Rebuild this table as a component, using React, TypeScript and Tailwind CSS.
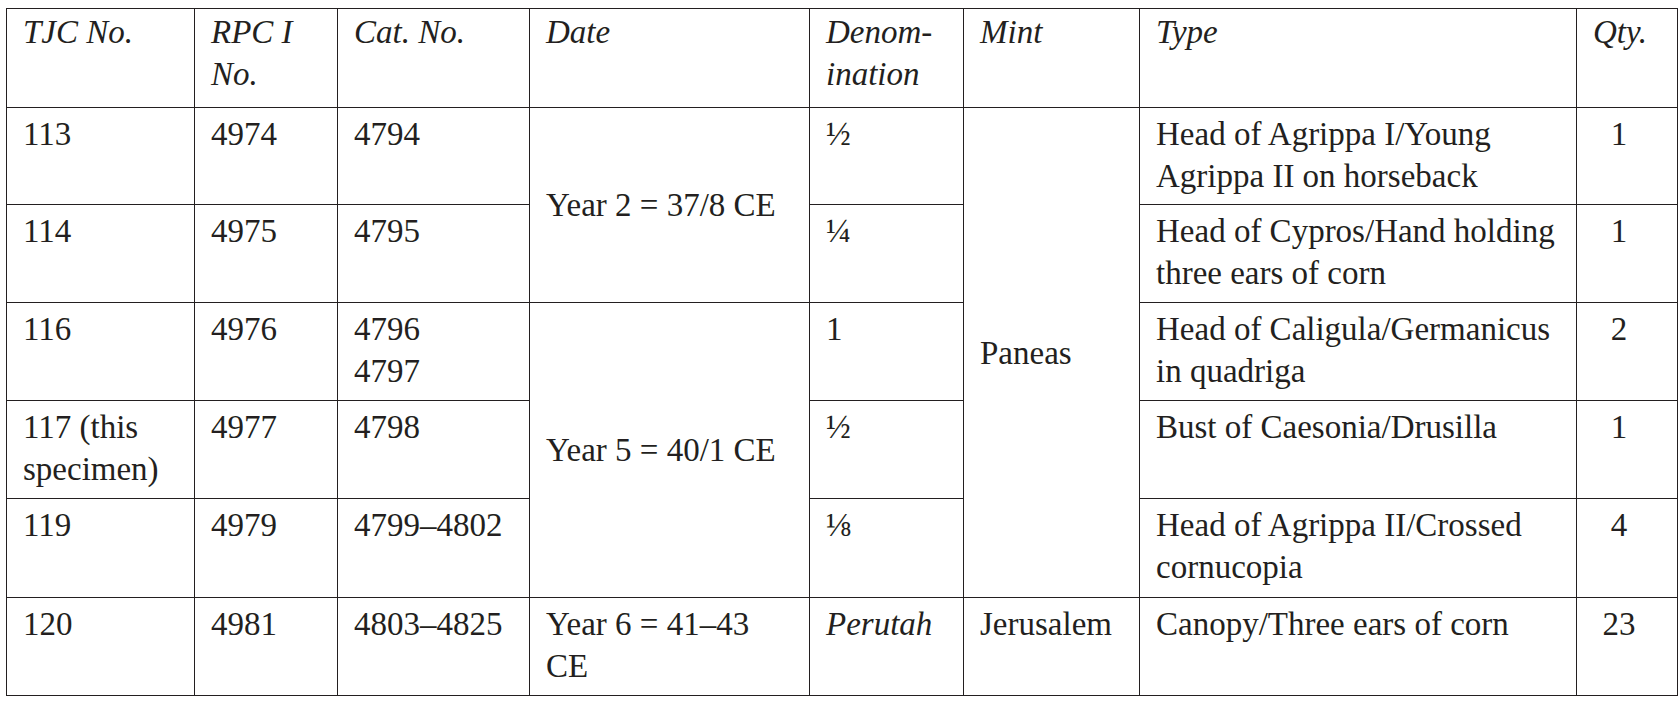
import React from 'react';

// coin register, rows in print order; merged Date / Mint cells use rowSpan
const HEADERS = ['TJC No.', 'RPC I\nNo.', 'Cat. No.', 'Date', 'Denom-\nination', 'Mint', 'Type', 'Qty.'];
const WIDTHS = ['w-[188px]', 'w-[143px]', 'w-[192px]', 'w-[280px]', 'w-[154px]', 'w-[176px]', 'w-[437px]', 'w-[101px]'];

const head = 'border border-[#231f20] px-4 pt-[2px] align-top text-left font-normal italic';
const cell = 'border border-[#231f20] px-4 pt-[5px] align-top';
const merged = 'border border-[#231f20] px-4 align-middle';
const qty = 'border border-[#231f20] pl-4 pr-8 pt-[5px] align-top text-center';

function Lines({ text }: { text: string }) {
  return (
    <>
      {text.split('\n').map((t, i) => (
        <div key={i} className="whitespace-nowrap">{t}</div>
      ))}
    </>
  );
}

export default function App() {
  return (
    <div
      className="bg-white min-h-screen pl-[6px] pt-[8px] text-[#231f20] text-[33px] leading-[42px]"
      style={{ fontFamily: '"Liberation Serif", "Times New Roman", serif' }}
    >
      <table className="table-fixed border-collapse w-[1671px]">
        <colgroup>
          {WIDTHS.map((w, i) => (
            <col key={i} className={w} />
          ))}
        </colgroup>
        <thead>
          <tr className="h-[99px]">
            {HEADERS.map((h, i) => (
              <th key={i} className={head}>
                <Lines text={h} />
              </th>
            ))}
          </tr>
        </thead>
        <tbody>
          <tr className="h-[97px]">
            <td className={cell}>113</td>
            <td className={cell}>4974</td>
            <td className={cell}>4794</td>
            <td className={merged} rowSpan={2}>Year 2 = 37/8 CE</td>
            <td className={cell}>½</td>
            <td className={merged} rowSpan={5}>Paneas</td>
            <td className={cell}><Lines text={'Head of Agrippa I/Young\nAgrippa II on horseback'} /></td>
            <td className={qty}>1</td>
          </tr>
          <tr className="h-[98px]">
            <td className={cell}>114</td>
            <td className={cell}>4975</td>
            <td className={cell}>4795</td>
            <td className={cell}>¼</td>
            <td className={cell}><Lines text={'Head of Cypros/Hand holding\nthree ears of corn'} /></td>
            <td className={qty}>1</td>
          </tr>
          <tr className="h-[98px]">
            <td className={cell}>116</td>
            <td className={cell}>4976</td>
            <td className={cell}><Lines text={'4796\n4797'} /></td>
            <td className={merged} rowSpan={3}>Year 5 = 40/1 CE</td>
            <td className={cell}>1</td>
            <td className={cell}><Lines text={'Head of Caligula/Germanicus\nin quadriga'} /></td>
            <td className={qty}>2</td>
          </tr>
          <tr className="h-[98px]">
            <td className={cell}><Lines text={'117 (this\nspecimen)'} /></td>
            <td className={cell}>4977</td>
            <td className={cell}>4798</td>
            <td className={cell}>½</td>
            <td className={cell}>Bust of Caesonia/Drusilla</td>
            <td className={qty}>1</td>
          </tr>
          <tr className="h-[99px]">
            <td className={cell}>119</td>
            <td className={cell}>4979</td>
            <td className={cell}>4799–4802</td>
            <td className={cell}>⅛</td>
            <td className={cell}><Lines text={'Head of Agrippa II/Crossed\ncornucopia'} /></td>
            <td className={qty}>4</td>
          </tr>
          <tr className="h-[98px]">
            <td className={cell}>120</td>
            <td className={cell}>4981</td>
            <td className={cell}>4803–4825</td>
            <td className={cell}><Lines text={'Year 6 = 41–43\nCE'} /></td>
            <td className={`${cell} italic`}>Perutah</td>
            <td className={cell}>Jerusalem</td>
            <td className={cell}>Canopy/Three ears of corn</td>
            <td className={qty}>23</td>
          </tr>
        </tbody>
      </table>
    </div>
  );
}
